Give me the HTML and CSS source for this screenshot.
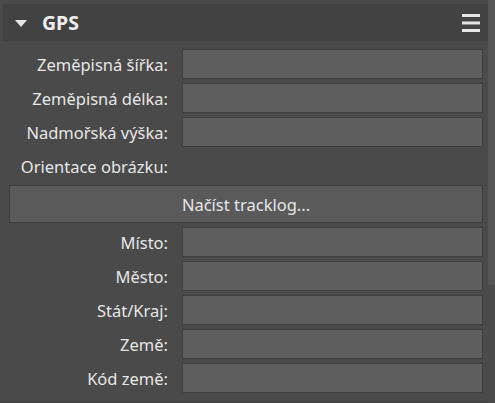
FILE: index.html
```html
<!DOCTYPE html>
<html lang="cs">
<head>
<meta charset="utf-8">
<link rel="stylesheet" href="styles.css">
</head>
<body>
<div class="window">
  <div class="panel">
    <div class="header">
      <span class="caret"></span>
      <span class="title">GPS</span>
      <svg class="menu" width="18" height="18" viewBox="0 0 18 18">
        <rect x="0" y="0" width="18" height="3" fill="#e6e6e6"/>
        <rect x="0" y="7.5" width="18" height="3" fill="#e6e6e6"/>
        <rect x="0" y="15" width="18" height="3" fill="#e6e6e6"/>
      </svg>
    </div>
    <div class="form">
      <label class="lbl">Zeměpisná šířka:</label><div class="field"></div>
      <label class="lbl">Zeměpisná délka:</label><div class="field"></div>
      <label class="lbl">Nadmořská výška:</label><div class="field"></div>
      <label class="lbl">Orientace obrázku:</label><div class="empty"></div>
      <div class="button">Načíst tracklog...</div>
      <label class="lbl">Místo:</label><div class="field"></div>
      <label class="lbl">Město:</label><div class="field"></div>
      <label class="lbl">Stát/Kraj:</label><div class="field"></div>
      <label class="lbl">Země:</label><div class="field"></div>
      <label class="lbl">Kód země:</label><div class="field"></div>
    </div>
    <div class="bottom"></div>
  </div>
  <div class="scrollbar"><div class="thumb"></div></div>
</div>
</body>
</html>
```
FILE: styles.css
```css
html, body {
  margin: 0;
  padding: 0;
  background: #4a4a4a;
}
body {
  font-family: "Noto Sans", "Open Sans", "DejaVu Sans", sans-serif;
  color: #e6e6e6;
}
.window {
  display: flex;
  width: 495px;
  height: 403px;
  overflow: hidden;
}
.panel {
  width: 488px;
  padding-top: 4px;
  display: flex;
  flex-direction: column;
}
.header {
  margin-left: 3px;
  height: 37px;
  background: #424242;
  display: flex;
  align-items: center;
  padding-left: 12px;
  padding-right: 8px;
}
.caret {
  width: 0;
  height: 0;
  border-left: 6.5px solid transparent;
  border-right: 6.5px solid transparent;
  border-top: 7px solid #e6e6e6;
  margin-top: 1px;
}
.title {
  margin-left: 15px;
  font-weight: 700;
  font-size: 19.5px;
  color: #eeeeee;
  flex: 1;
}
.menu {
  display: block;
  margin-top: 1px;
}
.form {
  margin-top: 8px;
  display: grid;
  grid-template-columns: 168px 301px;
  grid-template-rows: repeat(4, 30px) 38px repeat(5, 30px);
  column-gap: 14px;
  row-gap: 4px;
}
.lbl {
  text-align: right;
  font-size: 16.5px;
  line-height: 30px;
  white-space: nowrap;
  padding-top: 1px;
}
.field {
  background: #5e5e5e;
  border: 1px solid #3e3e3e;
}
.button {
  grid-column: 1 / -1;
  margin-left: 9px;
  box-sizing: border-box;
  background: #5a5a5a;
  border: 1px solid #3e3e3e;
  display: flex;
  align-items: center;
  justify-content: center;
  font-size: 16.5px;
  padding-top: 1px;
}
.bottom {
  margin-top: auto;
  height: 2px;
  background: #444444;
}
.scrollbar {
  width: 7px;
  background: #4a4a4a;
}
.thumb {
  height: 285px;
  background: #555555;
}
```
